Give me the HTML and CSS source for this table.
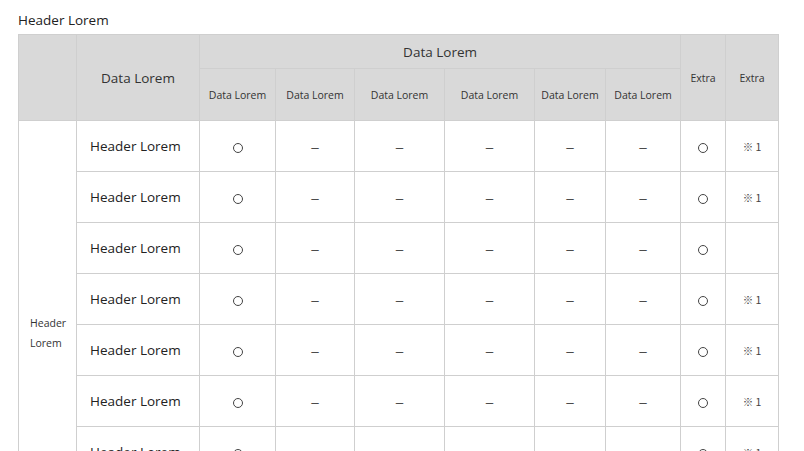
FILE: index.html
```html
<!DOCTYPE html>
<html lang="en">
<head>
<meta charset="utf-8">
<link rel="stylesheet" href="styles.css">
</head>
<body>
<div class="page">
  <h2 class="title">Header Lorem</h2>
  <table class="grid">
    <colgroup>
      <col style="width:58px"><col style="width:123px"><col style="width:76px"><col style="width:79px"><col style="width:90px"><col style="width:90px"><col style="width:71px"><col style="width:75px"><col style="width:45px"><col style="width:53px">
    </colgroup>
    <thead>
      <tr class="h1">
        <th rowspan="2"></th>
        <th rowspan="2" class="big">Data Lorem</th>
        <th colspan="6" class="big">Data Lorem</th>
        <th rowspan="2" class="small">Extra</th>
        <th rowspan="2" class="small">Extra</th>
      </tr>
      <tr class="h2">
        <th class="small">Data Lorem</th>
        <th class="small">Data Lorem</th>
        <th class="small">Data Lorem</th>
        <th class="small">Data Lorem</th>
        <th class="small">Data Lorem</th>
        <th class="small">Data Lorem</th>
      </tr>
    </thead>
    <tbody>
      <tr>
        <td rowspan="8" class="side"><span>Header Lorem</span></td>
        <td class="name">Header Lorem</td>
        <td><span class="circ"></span></td><td class="dash">–</td><td class="dash">–</td><td class="dash">–</td><td class="dash">–</td><td class="dash">–</td>
        <td><span class="circ"></span></td><td class="note">※ 1</td>
      </tr>
      <tr>
        <td class="name">Header Lorem</td>
        <td><span class="circ"></span></td><td class="dash">–</td><td class="dash">–</td><td class="dash">–</td><td class="dash">–</td><td class="dash">–</td>
        <td><span class="circ"></span></td><td class="note">※ 1</td>
      </tr>
      <tr>
        <td class="name">Header Lorem</td>
        <td><span class="circ"></span></td><td class="dash">–</td><td class="dash">–</td><td class="dash">–</td><td class="dash">–</td><td class="dash">–</td>
        <td><span class="circ"></span></td><td class="note"></td>
      </tr>
      <tr>
        <td class="name">Header Lorem</td>
        <td><span class="circ"></span></td><td class="dash">–</td><td class="dash">–</td><td class="dash">–</td><td class="dash">–</td><td class="dash">–</td>
        <td><span class="circ"></span></td><td class="note">※ 1</td>
      </tr>
      <tr>
        <td class="name">Header Lorem</td>
        <td><span class="circ"></span></td><td class="dash">–</td><td class="dash">–</td><td class="dash">–</td><td class="dash">–</td><td class="dash">–</td>
        <td><span class="circ"></span></td><td class="note">※ 1</td>
      </tr>
      <tr>
        <td class="name">Header Lorem</td>
        <td><span class="circ"></span></td><td class="dash">–</td><td class="dash">–</td><td class="dash">–</td><td class="dash">–</td><td class="dash">–</td>
        <td><span class="circ"></span></td><td class="note">※ 1</td>
      </tr>
      <tr>
        <td class="name">Header Lorem</td>
        <td><span class="circ"></span></td><td class="dash"></td><td class="dash"></td><td class="dash"></td><td class="dash"></td><td class="dash"></td>
        <td><span class="circ"></span></td><td class="note">※ 1</td>
      </tr>
      <tr>
        <td class="name">Header Lorem</td>
        <td><span class="circ"></span></td><td class="dash"></td><td class="dash"></td><td class="dash"></td><td class="dash"></td><td class="dash"></td>
        <td><span class="circ"></span></td><td class="note">※ 1</td>
      </tr>
    </tbody>
  </table>
</div>
</body>
</html>
```

FILE: styles.css
```css
html, body {
  margin: 0;
  padding: 0;
  background: #fff;
}
body {
  font-family: "Open Sans", "Noto Sans", "Noto Sans CJK JP", sans-serif;
  color: #333;
}
.page {
  padding: 0 18px;
}
.title {
  margin: 0;
  padding-top: 10px;
  height: 24px;
  font-size: 13.5px;
  font-weight: 400;
  line-height: 20px;
  color: #222;
}
.grid {
  border-collapse: collapse;
  table-layout: fixed;
  width: 760px;
}
.grid th, .grid td {
  border: 1px solid #cfcfcf;
  padding: 0;
  text-align: center;
  vertical-align: middle;
}
.grid th {
  background: #d9d9d9;
  font-weight: 400;
  color: #333;
}
.h1 { height: 34px; }
.h2 { height: 52px; }
.big {
  font-size: 13.5px;
}
.small {
  font-size: 10.5px;
}
.grid tbody tr {
  height: 51px;
}
.name {
  text-align: left !important;
  padding-left: 13px !important;
  font-size: 13.5px;
  color: #222;
}
.side {
  text-align: left !important;
  padding: 16px 0 0 11px !important;
  font-size: 10.5px;
  line-height: 20px;
  color: #333;
}
.side span {
  display: block;
  width: 40px;
}
.circ {
  display: inline-block;
  width: 8px;
  height: 8px;
  border: 1px solid #444;
  border-radius: 50%;
  vertical-align: middle;
}
.dash {
  font-family: "Noto Sans CJK JP", sans-serif;
  font-size: 17px;
  font-weight: 300;
  line-height: 20px;
  color: #222;
}
.note {
  font-family: "Noto Sans CJK JP", sans-serif;
  font-size: 10.5px;
  color: #444;
}
```
